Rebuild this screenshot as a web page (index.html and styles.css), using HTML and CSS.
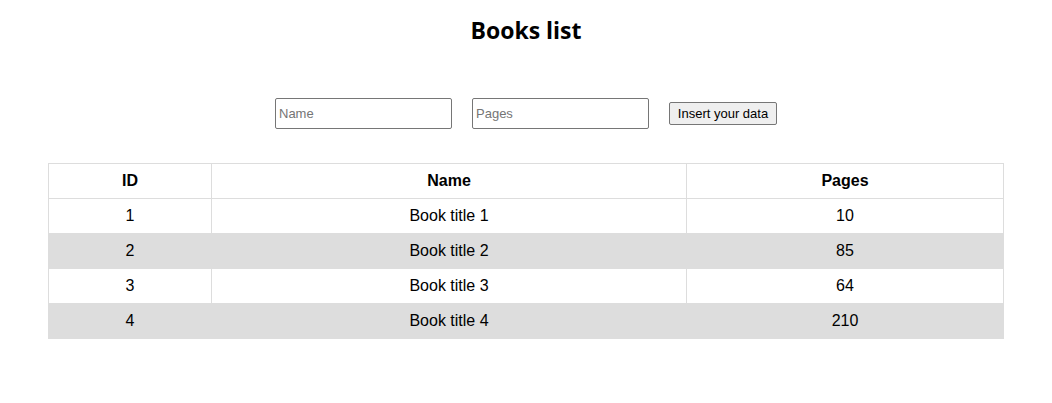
FILE: index.html
```html
<!DOCTYPE html>
<html>
<head>
<meta charset="utf-8">
<title>Books list</title>
<link rel="stylesheet" href="styles.css">
</head>
<body>
<h2 class="title">Books list</h2>
<form class="form">
  <input class="field" type="text" placeholder="Name">
  <input class="field" type="text" placeholder="Pages">
  <button class="btn" type="button">Insert your data</button>
</form>
<table class="books">
  <colgroup>
    <col class="c-id">
    <col class="c-name">
    <col class="c-pages">
  </colgroup>
  <thead>
    <tr><th>ID</th><th>Name</th><th>Pages</th></tr>
  </thead>
  <tbody>
    <tr><td>1</td><td>Book title 1</td><td>10</td></tr>
    <tr><td>2</td><td>Book title 2</td><td>85</td></tr>
    <tr><td>3</td><td>Book title 3</td><td>64</td></tr>
    <tr><td>4</td><td>Book title 4</td><td>210</td></tr>
  </tbody>
</table>
</body>
</html>
```
FILE: styles.css
```css
html, body {
  margin: 0;
  padding: 0;
  background: #ffffff;
}
body {
  font-family: "Liberation Sans", Arial, sans-serif;
  color: #000;
}
.title {
  margin: 0;
  padding-top: 14px;
  font-family: "Open Sans", "Noto Sans", sans-serif;
  font-size: 23px;
  line-height: 32px;
  font-weight: 700;
  text-align: center;
}
.form {
  margin: 52px 0 0;
  display: flex;
  justify-content: center;
  align-items: center;
  gap: 20px;
}
.field {
  box-sizing: border-box;
  width: 177px;
  height: 31px;
  margin: 0;
  padding: 0 3px;
  border: 1px solid #767676;
  border-radius: 2px;
  font-family: "Liberation Sans", Arial, sans-serif;
  font-size: 13px;
  color: #000;
  background: #fff;
}
.field::placeholder {
  color: #757575;
}
.btn {
  box-sizing: border-box;
  width: 108px;
  height: 23px;
  margin: 0;
  padding: 1px 6px;
  border: 1px solid #767676;
  border-radius: 2px;
  background: #efefef;
  font-family: "Liberation Sans", Arial, sans-serif;
  font-size: 13px;
  color: #000;
}
.books {
  margin: 34px 48px 0;
  width: calc(100% - 96px);
  border-collapse: collapse;
  table-layout: fixed;
  font-size: 16px;
}
.c-id { width: 163px; }
.c-name { width: 475px; }
.c-pages { width: auto; }
.books th,
.books td {
  border: 1px solid #dddddd;
  padding: 8px;
  line-height: 18px;
  text-align: center;
}
.books th {
  font-weight: 700;
}
.books tbody tr:nth-child(even) {
  background: #dddddd;
}
```
